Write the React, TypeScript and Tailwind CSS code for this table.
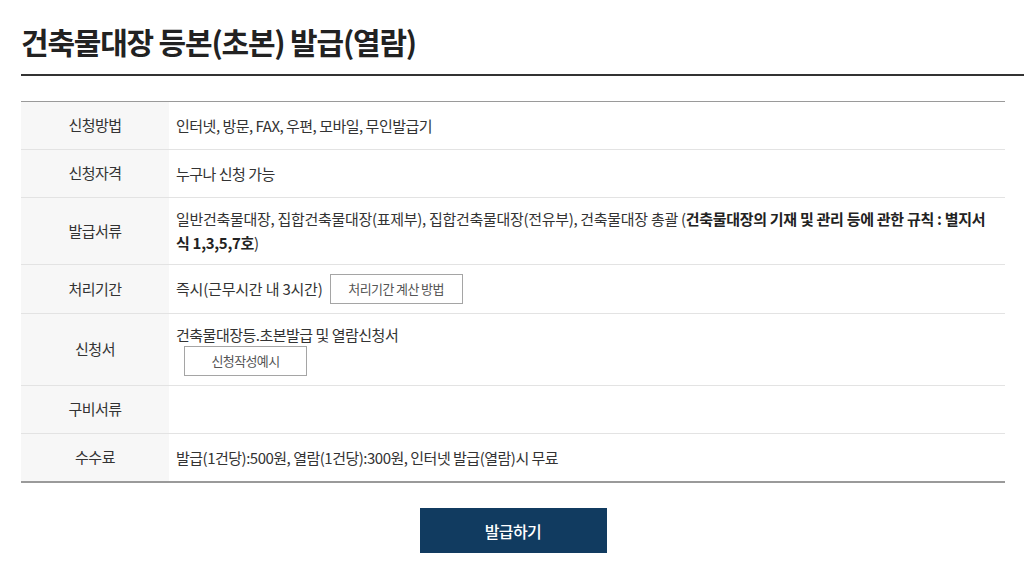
const App = () => {
  const font = "font-['Noto_Sans_CJK_KR','Noto_Sans',sans-serif]";

  const Row = ({ label, children }: { label: string; children?: React.ReactNode }) => (
    <div className="grid grid-cols-[148px_1fr] border-b border-[#e3e3e3] last:border-b-0">
      <div className="bg-[#f7f7f7] flex items-center justify-center text-[15px] text-[#333] tracking-[-0.5px]">
        {label}
      </div>
      <div className="min-h-[47px] flex flex-col justify-center py-[9px] pl-[7px] pr-[16px] text-[15px] leading-[24px] text-[#333] tracking-[-0.5px]">
        {children}
      </div>
    </div>
  );

  return (
    <div className={`${font} bg-white w-[1024px] h-[578px] overflow-hidden`}>
      <div className="pl-[21px] pt-[18px]">
        <h1 className="text-[30px] font-bold text-[#222] leading-[46px] tracking-[-1.2px] pb-[10px] border-b-2 border-[#333]">
          건축물대장 등본(초본) 발급(열람)
        </h1>

        <div className="mt-[25px] mr-[19px] border-t border-b-2 border-[#9a9a9a]">
          <Row label="신청방법">인터넷, 방문, FAX, 우편, 모바일, 무인발급기</Row>
          <Row label="신청자격">누구나 신청 가능</Row>
          <Row label="발급서류">
            <p className="tracking-[-0.3px]">
              일반건축물대장, 집합건축물대장(표제부), 집합건축물대장(전유부), 건축물대장 총괄 (
              <b className="text-[#222]">건축물대장의 기재 및 관리 등에 관한 규칙 : 별지서식 1,3,5,7호</b>)
            </p>
          </Row>
          <Row label="처리기간">
            <div className="flex items-center gap-[7px]">
              <span className="tracking-[-0.2px]">즉시(근무시간 내 3시간)</span>
              <button className="h-[30px] w-[133px] border border-[#a5a5a5] bg-white text-[13px] text-[#555] tracking-[-0.6px]">
                처리기간 계산 방법
              </button>
            </div>
          </Row>
          <Row label="신청서">
            <span className="leading-[23px]">건축물대장등.초본발급 및 열람신청서</span>
            <button className="ml-[8px] h-[30px] w-[123px] border border-[#a5a5a5] bg-white text-[13px] text-[#555] tracking-[-0.6px]">
              신청작성예시
            </button>
          </Row>
          <Row label="구비서류" />
          <Row label="수수료">발급(1건당):500원, 열람(1건당):300원, 인터넷 발급(열람)시 무료</Row>
        </div>

        <div className="mt-[25px] flex justify-center pr-[19px]">
          <button className="h-[45px] w-[187px] bg-[#113b60] text-white text-[16px] font-medium tracking-[-0.6px]">
            발급하기
          </button>
        </div>
      </div>
    </div>
  );
};

export default App;
